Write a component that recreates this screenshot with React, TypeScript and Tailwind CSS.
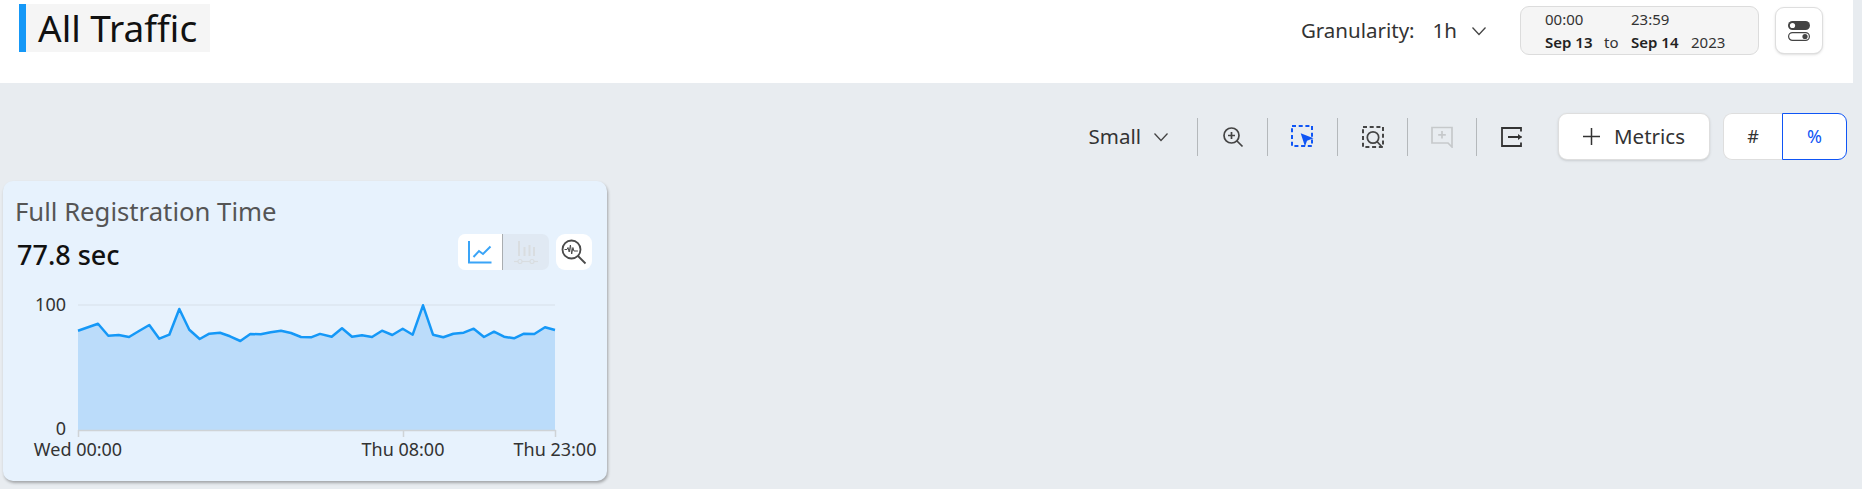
const POINTS: [number, number][] = [
  [78, 330.7], [98, 323.7], [108.3, 335.7], [118.7, 335], [129, 337], [139, 331], [149.3, 325], [159.3, 338.7],
  [169.3, 334.7], [179.3, 309], [189.3, 329.7], [199.7, 339], [209.3, 333.7], [220, 332.7], [230, 336.3], [240.3, 341],
  [250.3, 334], [260.7, 334.3], [270.7, 332.3], [281, 330.7], [291, 333], [301, 337], [311, 337.3], [320, 333.9],
  [331.7, 336.7], [342, 328.3], [352, 336.7], [362, 335.3], [372, 337], [382, 330.7], [392.3, 335], [402.7, 328.7],
  [412.7, 334.7], [423, 305.3], [433, 334.7], [443.3, 337.3], [453.3, 333.7], [463.7, 332.7], [473.7, 328.7], [484, 337],
  [494, 331.7], [504, 336.7], [514, 338.3], [524, 333.7], [534.3, 334], [545, 327.3], [555, 330],
]

// chart svg starts at x=3, y=285 inside the card
const line = POINTS.map(([x, y]) => `${x - 3},${y - 285}`).join(' ')
const area = `75,145 ${line} 552,145`

function Divider() {
  return <div className="w-px h-[38px] bg-[#b4b8bb]" />
}

function Chart() {
  return (
    <svg width="600" height="175" className="block" style={{ fontFamily: '"Noto Sans", sans-serif' }}>
      <line x1="75" y1="20" x2="552" y2="20" stroke="#dde6ef" strokeWidth="1.5" />
      <polygon points={area} fill="#bbdcfa" />
      <polyline points={line} fill="none" stroke="#1598f7" strokeWidth="2.5" strokeLinejoin="round" />
      <line x1="75" y1="145.5" x2="553" y2="145.5" stroke="#cfd3d6" strokeWidth="1.5" />
      <line x1="75.5" y1="145" x2="75.5" y2="152" stroke="#cfd3d6" strokeWidth="1.5" />
      <line x1="400.5" y1="145" x2="400.5" y2="152" stroke="#cfd3d6" strokeWidth="1.5" />
      <line x1="552.5" y1="145" x2="552.5" y2="152" stroke="#cfd3d6" strokeWidth="1.5" />
      <text x="63" y="26" textAnchor="end" fontSize="18" fill="#333">100</text>
      <text x="63" y="150" textAnchor="end" fontSize="18" fill="#333">0</text>
      <text x="75" y="171" textAnchor="middle" fontSize="18" fill="#333">Wed 00:00</text>
      <text x="400" y="171" textAnchor="middle" fontSize="18" fill="#333">Thu 08:00</text>
      <text x="552" y="171" textAnchor="middle" fontSize="18" fill="#333">Thu 23:00</text>
    </svg>
  )
}

export default function App() {
  return (
    <main className="h-[489px] bg-[#e8ecf0] overflow-hidden font-['Noto_Sans',sans-serif]">
      <header className="h-[83px] w-[1853px] bg-white flex justify-between items-start">
        <h1 className="mt-[4px] ml-[19px] h-[48px] w-[191px] bg-[#f5f5f5] border-l-[7px] border-[#1598f7] pl-[12px] text-[37px] leading-[48px] text-[#111] whitespace-nowrap">
          All Traffic
        </h1>
        <div className="flex items-center mt-[6px] mr-[30px]">
          <span className="text-[20.5px] text-[#333]">Granularity:</span>
          <span className="ml-[18px] text-[20.5px] text-[#333]">1h</span>
          <svg width="16" height="10" viewBox="0 0 16 10" className="ml-[14px]" fill="none" stroke="#444" strokeWidth="1.3">
            <path d="M1.5 1.5 8 8.5l6.5-7" />
          </svg>
          <div className="ml-[33px] w-[239px] h-[49px] rounded-[9px] bg-[#f5f5f5] border border-[#dcdcdc] pl-[24px] pt-[1px] text-[#333]">
            <div className="flex text-[15px] leading-[22px]">
              <span className="w-[86px]">00:00</span>
              <span>23:59</span>
            </div>
            <div className="flex text-[15px] leading-[24px] whitespace-nowrap">
              <span className="w-[59px] font-semibold text-[#222]">Sep 13</span>
              <span className="w-[27px]">to</span>
              <span className="w-[60px] font-semibold text-[#222]">Sep 14</span>
              <span>2023</span>
            </div>
          </div>
          <button className="ml-[16px] w-[48px] h-[47px] rounded-[9px] bg-white border border-[#dedede] shadow-sm flex items-center justify-center">
            <svg width="24" height="24" viewBox="0 0 24 24">
              <rect x="1" y="2" width="22" height="9" rx="4.5" fill="#444" />
              <circle cx="5.5" cy="6.5" r="2.6" fill="#fff" />
              <rect x="1.6" y="13.6" width="20.8" height="7.8" rx="3.9" fill="none" stroke="#444" strokeWidth="1.2" />
              <circle cx="18" cy="17.5" r="2.6" fill="#444" />
            </svg>
          </button>
        </div>
      </header>

      <div className="h-[98px] flex justify-end items-center pr-[15px] pt-[9px]">
        <div className="flex items-center">
          <span className="text-[20.5px] text-[#333]">Small</span>
          <svg width="16" height="10" viewBox="0 0 16 10" className="ml-[12px]" fill="none" stroke="#444" strokeWidth="1.3">
            <path d="M1.5 1.5 8 8.5l6.5-7" />
          </svg>
        </div>
        <div className="ml-[28px]"><Divider /></div>
        <div className="w-[69px] flex justify-center">
          <svg width="22" height="22" viewBox="0 0 22 22" fill="none" stroke="#444" strokeWidth="1.7">
            <circle cx="9.5" cy="9.5" r="7.5" />
            <path d="M15 15l5.5 5.5M9.5 6v7M6 9.5h7" />
          </svg>
        </div>
        <Divider />
        <div className="w-[69px] flex justify-center">
          <svg width="23" height="23" viewBox="0 0 23 23" fill="none">
            <rect x="1" y="1" width="20" height="20" stroke="#0f55f5" strokeWidth="2" strokeDasharray="4 2.7" />
            <path d="M9.7 8.3 22.5 13.3l-6.5 2.4L14 21.5z" fill="#0f55f5" />
          </svg>
        </div>
        <Divider />
        <div className="w-[69px] flex justify-center">
          <svg width="22" height="22" viewBox="0 0 22 22" fill="none" stroke="#444">
            <rect x="1" y="1" width="20" height="20" strokeWidth="2" strokeDasharray="4 2.7" />
            <circle cx="11" cy="11.5" r="5.7" strokeWidth="1.7" />
            <path d="M15 15.5l5 5.5" strokeWidth="1.7" />
          </svg>
        </div>
        <Divider />
        <div className="w-[68px] flex justify-center">
          <svg width="22" height="22" viewBox="0 0 22 22" fill="none" stroke="#c6c9cb" strokeWidth="1.7">
            <path d="M1 1.5h20v19.5l-4-4H1z" />
            <path d="M11 5v7.5M7.2 8.8h7.6" />
          </svg>
        </div>
        <Divider />
        <div className="w-[69px] flex justify-center">
          <svg width="22" height="20" viewBox="0 0 22 20" fill="none" stroke="#333" strokeWidth="1.8">
            <path d="M20 4.5V1H1v18h19v-3.5" />
            <path d="M7 10h13.5" strokeWidth="2" />
            <path d="M17 7l4 3-4 3z" fill="#333" stroke="none" />
          </svg>
        </div>
        <button className="ml-[12px] w-[152px] h-[47px] rounded-[9px] bg-white border border-[#dedede] shadow-sm flex items-center justify-center text-[20.5px] text-[#333]">
          <svg width="17" height="17" viewBox="0 0 17 17" className="mr-[14px]" fill="none" stroke="#333" strokeWidth="1.5">
            <path d="M8.5 0v17M0 8.5h17" />
          </svg>
          Metrics
        </button>
        <div className="ml-[13px] flex h-[47px]">
          <div className="w-[59px] rounded-l-[9px] bg-white border border-r-0 border-[#dedede] flex items-center justify-center text-[18px] text-[#333]">#</div>
          <div className="w-[65px] rounded-r-[9px] bg-white border border-[#0f55f5] flex items-center justify-center text-[18px] text-[#0f55f5]">%</div>
        </div>
      </div>

      <section className="ml-[3px] w-[604px] h-[300px] rounded-[10px] bg-[#e7f2fd] shadow-[1px_2px_3px_rgba(0,0,0,0.3)]">
        <div className="h-[104px] pl-[12px] pt-[15px] flex justify-between">
          <div>
            <h2 className="text-[25.7px] leading-[32px] text-[#555]">Full Registration Time</h2>
            <p className="mt-[9px] ml-[2px] text-[27px] leading-[36px] font-medium text-[#111]">77.8 sec</p>
          </div>
          <div className="flex items-start mt-[38px] mr-[15px]">
            <div className="w-[45px] h-[36px] rounded-l-[7px] bg-white border-r border-[#a9adb0] flex items-center justify-center">
              <svg width="24" height="24" viewBox="0 0 24 24" fill="none" stroke="#3aa4f7" strokeWidth="2">
                <path d="M1 1v21.5h22.5" />
                <path d="M5.5 17l5.5-6 4 3 7.5-7.5" />
              </svg>
            </div>
            <div className="w-[46px] h-[36px] rounded-r-[7px] bg-[#e0e9f3] flex items-center justify-center">
              <svg width="24" height="24" viewBox="0 0 24 24" fill="none" stroke="#d9dde0" strokeWidth="2">
                <path d="M5 1v15M10.5 7v9M15.5 5v11M20 7v9" />
                <path d="M0 21.5h24" strokeWidth="1.2" />
                <circle cx="6" cy="21.5" r="2" fill="#e0e9f3" strokeWidth="1.2" />
                <circle cx="18" cy="21.5" r="2" fill="#e0e9f3" strokeWidth="1.2" />
              </svg>
            </div>
            <div className="ml-[7px] w-[36px] h-[36px] rounded-[9px] bg-white flex items-center justify-center">
              <svg width="26" height="26" viewBox="0 0 26 26" fill="none" stroke="#4a4a4a">
                <circle cx="10.5" cy="10.5" r="9" strokeWidth="1.8" />
                <path d="M17 17l7.5 7.5" strokeWidth="1.8" />
                <path d="M3.5 10.5h2.5l1-2 1.2 4.5 1.2-7 1.3 9 1.2-6.5 1 3.5h4" strokeWidth="1" />
              </svg>
            </div>
          </div>
        </div>
        <Chart />
      </section>
    </main>
  )
}
